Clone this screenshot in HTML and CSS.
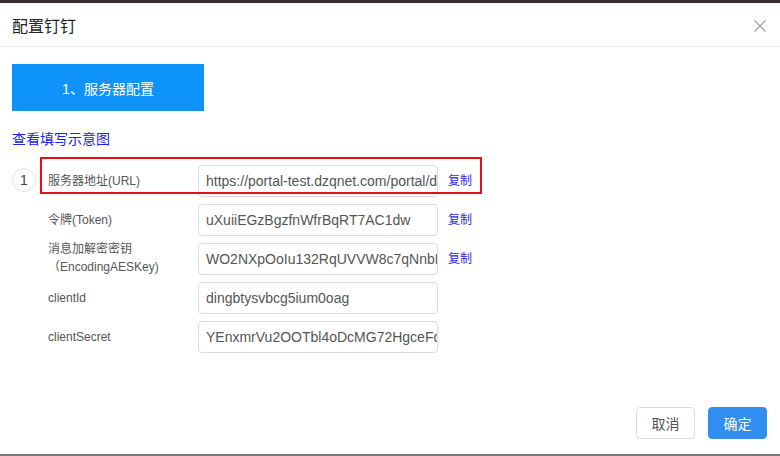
FILE: index.html
```html
<!DOCTYPE html>
<html lang="zh-CN">
<head>
<meta charset="UTF-8">
<meta name="viewport" content="width=device-width, initial-scale=1.0">
<title>配置钉钉</title>
<link rel="stylesheet" href="styles.css">
</head>
<body>
  <div class="dialog">
    <div class="dialog-header">
      <span class="dialog-title">配置钉钉</span>
      <svg class="close-icon" width="14" height="14" viewBox="0 0 14 14">
        <path d="M1.5 1.5 L12.5 12.5 M12.5 1.5 L1.5 12.5" stroke="#9aa4ad" stroke-width="1.3" fill="none"/>
      </svg>
    </div>

    <div class="dialog-body">
      <div class="step-tab">1、服务器配置</div>
      <a class="guide-link">查看填写示意图</a>

      <div class="form">
        <div class="step-num">1</div>
        <div class="rows">
          <div class="row">
            <label>服务器地址(URL)</label>
            <div class="field">https://portal-test.dzqnet.com/portal/dingtalk</div>
            <a class="copy">复制</a>
          </div>
          <div class="row">
            <label>令牌(Token)</label>
            <div class="field">uXuiiEGzBgzfnWfrBqRT7AC1dw</div>
            <a class="copy">复制</a>
          </div>
          <div class="row">
            <label class="two-line">消息加解密密钥<br>（EncodingAESKey)</label>
            <div class="field">WO2NXpOoIu132RqUVVW8c7qNnbLx</div>
            <a class="copy">复制</a>
          </div>
          <div class="row">
            <label>clientId</label>
            <div class="field">dingbtysvbcg5ium0oag</div>
          </div>
          <div class="row">
            <label>clientSecret</label>
            <div class="field">YEnxmrVu2OOTbl4oDcMG72HgceFq</div>
          </div>
        </div>
        <div class="highlight"></div>
      </div>
    </div>

    <div class="dialog-footer">
      <button class="btn">取消</button>
      <button class="btn btn-primary">确定</button>
    </div>
  </div>
</body>
</html>
```

FILE: styles.css
```css
body {
  margin: 0;
  padding: 3px 0 0;
  background-color: #3b2b31;
  font-family: "Liberation Sans", Arial, "Noto Sans CJK SC", sans-serif;
  color: #555;
}

.dialog {
  height: 453px;
  box-sizing: border-box;
  background-color: #fff;
  display: flex;
  flex-direction: column;
  border-bottom: 2px solid #7a7a7a;
}

.dialog-header {
  height: 43px;
  padding: 0 12px;
  border-bottom: 1px solid #e8e8e8;
  display: flex;
  align-items: center;
  justify-content: space-between;
}

.dialog-title {
  font-family: "Noto Sans CJK SC", sans-serif;
  font-size: 16px;
  color: #222;
  margin-top: 1px;
}

.close-icon {
  margin-right: 1px;
  margin-top: 3px;
}

.dialog-body {
  padding: 17px 12px 0;
}

.step-tab {
  width: 192px;
  height: 47px;
  background-color: #0e93fa;
  color: #fff;
  font-size: 14px;
  display: flex;
  align-items: center;
  justify-content: center;
}

.guide-link {
  display: block;
  margin-top: 17px;
  font-size: 14px;
  line-height: 20px;
  color: #2020f0;
  font-family: "Noto Sans CJK SC", sans-serif;
}

.form {
  position: relative;
  display: flex;
  margin-top: 17px;
}

.step-num {
  width: 22px;
  height: 22px;
  border: 1px solid #e2e2e2;
  border-radius: 50%;
  font-size: 14px;
  display: flex;
  align-items: center;
  justify-content: center;
  margin-top: 3px;
  color: #444;
}

.rows {
  margin-left: 12px;
  display: flex;
  flex-direction: column;
  gap: 7px;
}

.row {
  display: flex;
  align-items: center;
  height: 32px;
}

.row label {
  width: 150px;
  font-size: 12px;
  color: #555;
  line-height: 18px;
}

.row .two-line {
  margin-top: -2px;
}

.field {
  width: 224px;
  height: 30px;
  padding: 0 7px;
  border: 1px solid #dcdcdc;
  border-radius: 4px;
  font-size: 14px;
  line-height: 30px;
  color: #555;
  white-space: nowrap;
  overflow: hidden;
}

.copy {
  margin-left: 10px;
  font-size: 12px;
  color: #2b2bf0;
  margin-top: -3px;
}

.highlight {
  position: absolute;
  left: 28px;
  top: -8px;
  width: 438px;
  height: 33px;
  border: 2px solid #e3101a;
}

.dialog-footer {
  margin-top: auto;
  padding: 0 13px 15px;
  display: flex;
  justify-content: flex-end;
  gap: 13px;
}

.btn {
  width: 59px;
  height: 32px;
  border: 1px solid #dcdcdc;
  border-radius: 4px;
  background-color: #fff;
  font-family: "Noto Sans CJK SC", sans-serif;
  font-size: 14px;
  color: #555;
}

.btn-primary {
  background-color: #2f8ef0;
  border-color: #2f8ef0;
  color: #fff;
}
```
